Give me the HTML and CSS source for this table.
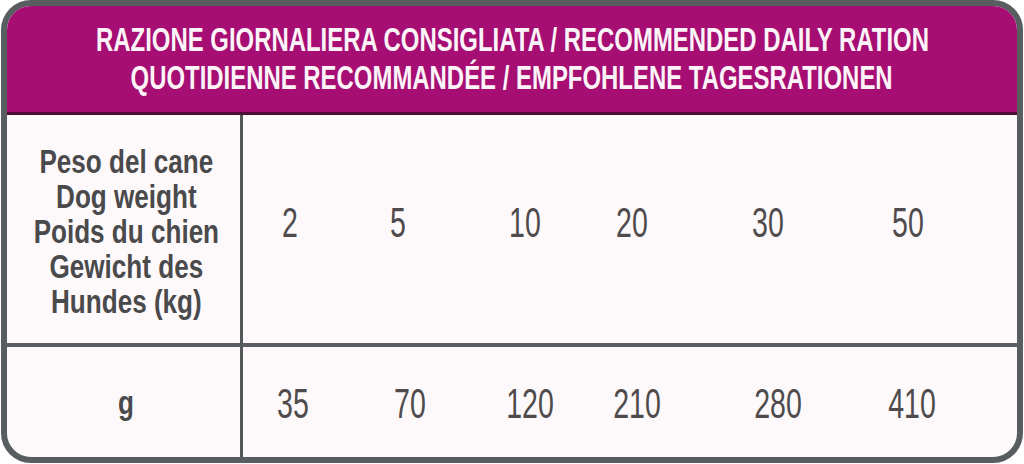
FILE: index.html
```html
<!DOCTYPE html>
<html lang="it">
<head>
<meta charset="utf-8">
<title>Razione giornaliera</title>
<link rel="stylesheet" href="styles.css">
</head>
<body>
<div class="card">
  <header class="head">
    <p class="head-line">RAZIONE GIORNALIERA CONSIGLIATA / RECOMMENDED DAILY RATION</p>
    <p class="head-line">QUOTIDIENNE RECOMMANDÉE / EMPFOHLENE TAGESRATIONEN</p>
  </header>
  <div class="table">
    <div class="label label-weight">
      <span class="lt">Peso del cane<br>Dog weight<br>Poids du chien<br>Gewicht des<br>Hundes (kg)</span>
    </div>
    <div class="vals vals-weight">
      <span class="num">2</span><span class="num">5</span><span class="num">10</span><span class="num">20</span><span class="num">30</span><span class="num">50</span>
    </div>
    <div class="label label-g"><span class="lt">g</span></div>
    <div class="vals vals-g">
      <span class="num">35</span><span class="num">70</span><span class="num">120</span><span class="num">210</span><span class="num">280</span><span class="num">410</span>
    </div>
  </div>
</div>
</body>
</html>
```

FILE: styles.css
```css
html, body {
  margin: 0;
  padding: 0;
  background: #ffffff;
}
body {
  width: 1024px;
  height: 464px;
  overflow: hidden;
  font-family: "Liberation Sans", Arial, sans-serif;
}
.card {
  box-sizing: border-box;
  width: 1022px;
  height: 463px;
  margin-left: 1px;
  border: 6px solid #585d60;
  border-radius: 30px;
  overflow: hidden;
  background: #fdf9fb;
  display: flex;
  flex-direction: column;
}
.head {
  background: #a60e73;
  border-bottom: 3px solid #4d0d36;
  display: flex;
  flex-direction: column;
  align-items: center;
  padding-top: 15px;
  height: 91px;
}
.head-line {
  margin: 0;
  color: #fbf3f8;
  font-weight: bold;
  font-size: 33px;
  line-height: 38px;
  white-space: nowrap;
  transform: scaleX(0.725);
}
.table {
  flex: 1;
  display: grid;
  grid-template-columns: 236px 1fr;
  grid-template-rows: 232px 1fr;
}
.label {
  border-right: 3px solid #54585b;
  display: flex;
  align-items: center;
  justify-content: center;
  color: #4a4a4c;
  font-weight: bold;
  text-align: center;
}
.label-weight,
.vals-weight {
  border-bottom: 4px solid #5a5e62;
}
.lt {
  font-size: 33px;
  line-height: 35px;
  white-space: nowrap;
  margin-left: 6px;
  transform: scaleX(0.79);
}
.label-weight .lt {
  margin-top: 4px;
}
.vals {
  display: grid;
  align-items: center;
  color: #4f4b4d;
}
.vals-weight {
  grid-template-columns: 94px 122px 132px 82px 190px 90px 1fr;
  padding-bottom: 12px;
  box-sizing: border-box;
}
.vals-g {
  grid-template-columns: 100px 134px 106px 108px 174px 94px 1fr;
  padding-top: 3px;
}
.num {
  text-align: center;
  font-size: 42px;
  line-height: 40px;
  transform: scaleX(0.68);
}
```
